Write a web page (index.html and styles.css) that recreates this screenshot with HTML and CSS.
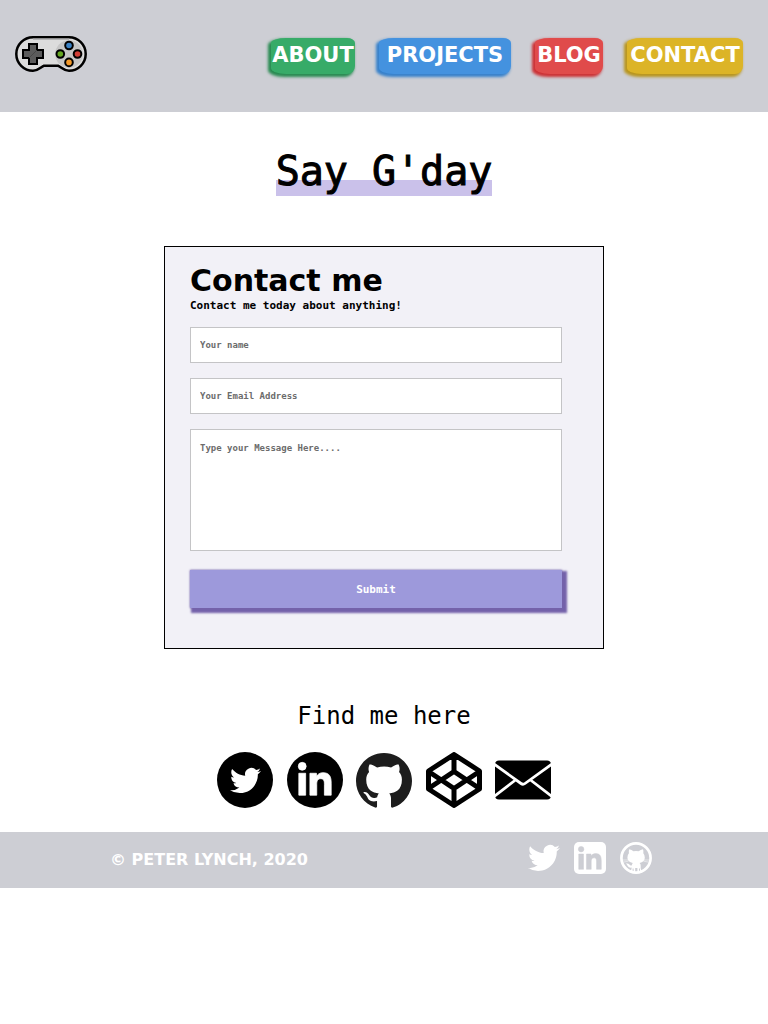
FILE: index.html
```html
<!DOCTYPE html>
<html lang="en">
<head>
<meta charset="utf-8">
<meta name="viewport" content="width=device-width, initial-scale=1">
<title>Say G'day</title>
<link rel="stylesheet" href="styles.css">
</head>
<body>
<svg width="0" height="0" class="defs" aria-hidden="true">
  <symbol id="bird" viewBox="0 0 24 24"><path d="M23.953 4.57a10 10 0 01-2.825.775 4.958 4.958 0 002.163-2.723c-.951.555-2.005.959-3.127 1.184a4.92 4.92 0 00-8.384 4.482C7.69 8.095 4.067 6.13 1.64 3.162a4.822 4.822 0 00-.666 2.475c0 1.71.87 3.213 2.188 4.096a4.904 4.904 0 01-2.228-.616v.06a4.923 4.923 0 003.946 4.827 4.996 4.996 0 01-2.212.085 4.936 4.936 0 004.604 3.417 9.867 9.867 0 01-6.102 2.105c-.39 0-.779-.023-1.17-.067a13.995 13.995 0 007.557 2.209c9.053 0 13.998-7.496 13.998-13.985 0-.21 0-.42-.015-.63A9.935 9.935 0 0024 4.59z"/></symbol>
  <symbol id="in" viewBox="0 0 24 24"><circle cx="5.34" cy="5.37" r="2.06"/><path d="M3.56 9h3.56v11.45H3.56zM20.45 20.45H16.9v-5.57c0-1.33-.03-3.04-1.85-3.04-1.85 0-2.14 1.45-2.14 2.94v5.67H9.35V9h3.41v1.56h.05c.48-.9 1.64-1.85 3.37-1.85 3.6 0 4.27 2.37 4.27 5.46z"/></symbol>
</svg>
<header class="site-header">
  <a class="logo" href="#" aria-label="Home">
    <svg width="72" height="36" viewBox="0 0 72 36">
      <path d="M18 1.3H54A16.7 16.7 0 0 1 54 34.7C48 34.7 46 30.8 43 29.8H29C26 30.8 24 34.7 18 34.7A16.7 16.7 0 0 1 18 1.3Z" fill="#dcdcdc" stroke="#000" stroke-width="2.5"/>
      <path d="M18 3.2H54" stroke="#a8a8aa" stroke-width="1.3"/>
      <circle cx="54" cy="18" r="13.8" fill="#c6c6c6"/>
      <path d="M14 8h8v6h6v8h-6v6h-8v-6H8v-8h6z" fill="#5b5b5b" stroke="#000" stroke-width="2"/>
      <path d="M14 22l8-8" stroke="#484848" stroke-width="1"/>
      <g stroke="#000" stroke-width="2"><circle cx="54" cy="9.5" r="3.8" fill="#3b82c4"/><circle cx="45.3" cy="18" r="3.8" fill="#65a622"/><circle cx="62.5" cy="18" r="3.8" fill="#d13f36"/><circle cx="54" cy="26.4" r="3.8" fill="#f49b2c"/></g>
    </svg>
  </a>
  <nav class="nav">
    <a class="nav-link about" href="#">ABOUT</a>
    <a class="nav-link projects" href="#">PROJECTS</a>
    <a class="nav-link blog" href="#">BLOG</a>
    <a class="nav-link contact" href="#">CONTACT</a>
  </nav>
</header>
<main class="main">
  <h1 class="title">Say G'day</h1>
  <form class="form">
    <h2 class="form-title">Contact me</h2>
    <p class="form-lead">Contact me today about anything!</p>
    <input class="field" type="text" placeholder="Your name" aria-label="Your name">
    <input class="field" type="email" placeholder="Your Email Address" aria-label="Your Email Address">
    <textarea class="field message" placeholder="Type your Message Here...." aria-label="Message"></textarea>
    <button class="submit" type="submit">Submit</button>
  </form>
  <h2 class="find">Find me here</h2>
  <div class="social">
    <a href="#" aria-label="Twitter"><svg width="56" height="56" viewBox="0 0 56 56"><circle cx="28" cy="28" r="28"/><use href="#bird" x="13" y="13" width="31" height="31" fill="#fff"/></svg></a>
    <a href="#" aria-label="LinkedIn"><svg width="56" height="56" viewBox="0 0 56 56"><circle cx="28" cy="28" r="28"/><use href="#in" x="5" y="4" width="46" height="46" fill="#fff" stroke="#fff" stroke-width=".4"/></svg></a>
    <a href="#" aria-label="GitHub"><svg width="56" height="56" viewBox="0 0 16 16"><path transform="translate(0 .3)" fill="#1d1d1d" d="M8 0C3.58 0 0 3.58 0 8c0 3.54 2.29 6.53 5.47 7.59.4.07.55-.17.55-.38 0-.19-.01-.82-.01-1.49-2.01.37-2.53-.49-2.69-.94-.09-.23-.48-.94-.82-1.13-.28-.15-.68-.52-.01-.53.63-.01 1.08.58 1.23.82.72 1.21 1.87.87 2.33.66.07-.52.28-.87.51-1.07-1.78-.2-3.64-.89-3.64-3.95 0-.87.31-1.59.82-2.15-.08-.2-.36-1.02.08-2.12 0 0 .67-.21 2.2.82.64-.18 1.32-.27 2-.27.68 0 1.36.09 2 .27 1.53-1.04 2.2-.82 2.2-.82.44 1.1.16 1.92.08 2.12.51.56.82 1.27.82 2.15 0 3.07-1.87 3.75-3.65 3.95.29.25.54.73.54 1.48 0 1.07-.01 1.93-.01 2.2 0 .21.15.46.55.38A8.013 8.013 0 0016 8c0-4.42-3.58-8-8-8z"/></svg></a>
    <a href="#" aria-label="CodePen"><svg width="56" height="56" viewBox="0 0 56 56" fill="none" stroke="#000" stroke-width="5" stroke-linejoin="round"><path d="M28 2.500L53.500 19V37L28 53.500L2.500 37V19ZM28 3V19.500M28 53V36.500M2.500 19.500L28 36.500L53.500 19.500M2.500 36.500L28 19.500L53.500 36.500"/></svg></a>
    <a href="#" aria-label="Email"><svg width="56" height="56" viewBox="0 0 56 56"><rect y="8.5" width="56" height="39" rx="4"/><path d="M-1 12L26 31.5Q28 33 30 31.5L57 12M-1 44.5L20.5 28M57 44.5L35.5 28" fill="none" stroke="#fff" stroke-width="2.8"/></svg></a>
  </div>
</main>
<footer class="footer">
  <p class="copyright">© PETER LYNCH, 2020</p>
  <div class="footer-social">
    <a href="#" aria-label="Twitter"><svg width="32" height="32" fill="#fff"><use href="#bird" width="32" height="32"/></svg></a>
    <a href="#" aria-label="LinkedIn"><svg width="32" height="32" viewBox="0 0 32 32"><rect width="32" height="32" rx="5" fill="#fff"/><use href="#in" x="0" y="0" width="32" height="32" fill="#cdced4" stroke="#cdced4" stroke-width=".4"/></svg></a>
    <a href="#" aria-label="GitHub"><svg width="32" height="32" viewBox="0 0 32 32" fill="#fff"><circle cx="16" cy="16" r="14.6" fill="none" stroke="#fff" stroke-width="2.7"/><path d="M9.2 7.2Q11.800 7.600 13.400 9.200Q16 8.600 18.600 9.200Q20.600 7.600 23 7.200Q23.800 9.600 23.300 11.200Q25 13 24.800 15.800Q24.500 20 19.600 21Q20.800 22 20.700 24V26.500Q20.800 28 22 28.800L20 30V26.500H19V30H17.400V26H15.200V30H13.600V26.500H12.600V30L10 29Q11.500 28 11.600 26.500V25.600Q8.800 26 7.700 24Q7 22.400 5.800 21.600Q8.200 21 9.400 22.600Q10.400 24 11.900 23.200Q12 21.800 12.800 21Q7.700 20 7.400 15.800Q7.200 13 8.900 11.200Q8.400 9.600 9.200 7.200Z"/><path d="M3 18h5M3 20.2l5.500-1M29 18h-5M29 20.2l-5.500-1" stroke="#fff" stroke-width=".5"/></svg></a>
  </div>
</footer>
</body>
</html>
```
FILE: styles.css
```css
* { box-sizing: border-box; }
body { margin: 0; background: #fff; color: #000; font-family: "DejaVu Sans Mono", monospace; }
h1, h2, p { margin: 0; }
a { color: inherit; text-decoration: none; }
svg { display: block; }
.defs { position: absolute; }

.site-header { min-height: 112px; padding: 0 25px 0 15px; background: #cdced4; display: flex; align-items: center; justify-content: space-between; }
.logo { margin-bottom: 4px; }
.nav { display: flex; gap: 24px; }
.nav-link { height: 36px; padding: 0 1px; border-radius: 15px 8px 8px 15px / 5px 5px 8px 6px; color: #fff; font: bold 21px/34px "DejaVu Sans", sans-serif; text-align: center; }
.about { min-width: 84px; background: #37ab68; box-shadow: -2px 2px 3px 1px #278a50; }
.projects { min-width: 132px; background: #4492df; box-shadow: -2px 2px 3px 1px #3580cb; }
.blog { min-width: 68px; background: #e04b4b; box-shadow: -2px 2px 3px 1px #cc3034; }
.contact { min-width: 116px; background: #dcb427; box-shadow: -2px 2px 3px 1px #b8951c; }

.main { display: flex; flex-direction: column; align-items: center; padding: 31px 16px 24px; }
.title { padding-top: 4px; font-size: 40px; font-weight: 400; line-height: 49px; background: linear-gradient(transparent 70%, #cac1ea 70%); -webkit-text-stroke: 1px #000; }
.form { width: 100%; max-width: 440px; margin-top: 50px; padding: 16px 41px 40px 25px; border: 1px solid #000; background: #f2f1f7; display: flex; flex-direction: column; }
.form-title { font: bold 30px/36px "DejaVu Sans", sans-serif; }
.form-lead { margin-bottom: 15px; font-size: 11px; font-weight: 700; line-height: 13px; }
.field { width: 100%; height: 36px; margin-bottom: 15px; padding: 0 9px; border: 1px solid #c4c4c6; border-radius: 0; background: #fff; font: bold 9px/14px "DejaVu Sans Mono", monospace; }
.field::placeholder { color: #6c6c6c; opacity: 1; }
.message { height: 122px; padding-top: 11px; margin-bottom: 19px; resize: none; }
.submit { height: 38px; padding: 2px 0 0; border: 0; background: #9d99db; color: #fff; font: bold 11px/36px "DejaVu Sans Mono", monospace; box-shadow: 3px 3px 2px 2px #7462aa, 0 0 2px #7462aa; }
.find { margin-top: 51px; font-size: 24px; font-weight: 400; line-height: 32px; }
.social { width: 100%; max-width: 334px; margin-top: 20px; display: flex; justify-content: space-between; }

.footer { min-height: 56px; padding: 0 116px 0 110px; background: #cdced4; color: #fff; display: flex; align-items: center; justify-content: space-between; }
.copyright { font: bold 16px/20px "DejaVu Sans", sans-serif; }
.footer-social { display: flex; gap: 14px; margin-bottom: 4px; }
```
